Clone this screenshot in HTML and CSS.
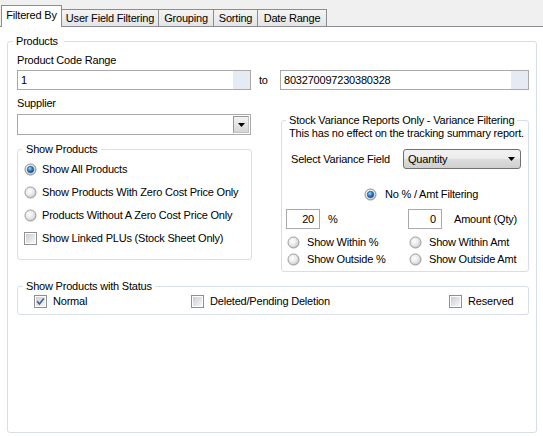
FILE: index.html
```html
<!DOCTYPE html>
<html>
<head>
<meta charset="utf-8">
<link rel="stylesheet" href="styles.css">
</head>
<body>
<svg class="defs" width="0" height="0">
  <defs>
    <radialGradient id="rg" cx="40%" cy="38%" r="65%">
      <stop offset="0" stop-color="#ffffff"/>
      <stop offset="0.55" stop-color="#e9e9e9"/>
      <stop offset="1" stop-color="#c4c4c4"/>
    </radialGradient>
    <radialGradient id="rd" cx="38%" cy="32%" r="70%">
      <stop offset="0" stop-color="#a8dcff"/>
      <stop offset="0.45" stop-color="#3c8fd6"/>
      <stop offset="1" stop-color="#0d4a88"/>
    </radialGradient>
    <linearGradient id="cg" x1="0" y1="0" x2="1" y2="1">
      <stop offset="0" stop-color="#c9cdd3"/>
      <stop offset="1" stop-color="#f7f7f7"/>
    </linearGradient>
  </defs>
</svg>
<div class="tabstrip">
  <div class="tab active t-fb">Filtered By</div>
  <div class="tab t-uff">User Field Filtering</div>
  <div class="tab t-grp">Grouping</div>
  <div class="tab t-srt">Sorting</div>
  <div class="tab t-dr">Date Range</div>
</div>
<div class="page">
  <fieldset class="gb products">
    <legend>Products</legend>
    <div class="lbl">Product Code Range</div>
    <div class="range">
      <div class="tb w-left"><span class="val">1</span><span class="side"></span></div>
      <span class="to">to</span>
      <div class="tb w-right"><span class="val">803270097230380328</span><span class="side"></span></div>
    </div>
    <div class="lower">
      <div class="col-left">
        <div class="lbl">Supplier</div>
        <div class="tb combo"><span class="val"></span><span class="ddbtn"><svg width="7" height="4" viewBox="0 0 7 4"><path d="M0 0H7L3.5 4Z" fill="#000"/></svg></span></div>
        <fieldset class="gb showprod">
          <legend>Show Products</legend>
          <div class="opt"><svg class="rb" viewBox="0 0 13 13"><circle cx="6.5" cy="6.5" r="5.5" fill="url(#rg)" stroke="#8c8c8c"/><circle cx="6.5" cy="6.5" r="3.2" fill="url(#rd)" stroke="#1e5284" stroke-width="0.7"/></svg>Show All Products</div>
          <div class="opt"><svg class="rb" viewBox="0 0 13 13"><circle cx="6.5" cy="6.5" r="5.5" fill="url(#rg)" stroke="#9a9a9a"/></svg>Show Products With Zero Cost Price Only</div>
          <div class="opt"><svg class="rb" viewBox="0 0 13 13"><circle cx="6.5" cy="6.5" r="5.5" fill="url(#rg)" stroke="#9a9a9a"/></svg>Products Without A Zero Cost Price Only</div>
          <div class="opt"><svg class="cb" viewBox="0 0 13 13"><rect x="0.5" y="0.5" width="12" height="12" fill="#fff" stroke="#8e8f8f"/><rect x="2" y="2" width="9" height="9" fill="url(#cg)"/></svg>Show Linked PLUs (Stock Sheet Only)</div>
        </fieldset>
      </div>
      <fieldset class="gb variance">
        <legend>Stock Variance Reports Only - Variance Filtering</legend>
        <div class="note">This has no effect on the tracking summary report.</div>
        <div class="selrow">
          <span class="sl">Select Variance Field</span>
          <div class="btncombo"><span>Quantity</span><svg width="7" height="4" viewBox="0 0 7 4"><path d="M0 0H7L3.5 4Z" fill="#000"/></svg></div>
        </div>
        <div class="opt nofilt"><svg class="rb" viewBox="0 0 13 13"><circle cx="6.5" cy="6.5" r="5.5" fill="url(#rg)" stroke="#8c8c8c"/><circle cx="6.5" cy="6.5" r="3.2" fill="url(#rd)" stroke="#1e5284" stroke-width="0.7"/></svg>No % / Amt Filtering</div>
        <div class="amtrow">
          <div class="tb num">20</div>
          <span class="pct">%</span>
          <div class="tb num">0</div>
          <span class="amt">Amount (Qty)</span>
        </div>
        <div class="within">
          <div class="opt"><svg class="rb" viewBox="0 0 13 13"><circle cx="6.5" cy="6.5" r="5.5" fill="url(#rg)" stroke="#9a9a9a"/></svg>Show Within %</div>
          <div class="opt"><svg class="rb" viewBox="0 0 13 13"><circle cx="6.5" cy="6.5" r="5.5" fill="url(#rg)" stroke="#9a9a9a"/></svg>Show Within Amt</div>
          <div class="opt"><svg class="rb" viewBox="0 0 13 13"><circle cx="6.5" cy="6.5" r="5.5" fill="url(#rg)" stroke="#9a9a9a"/></svg>Show Outside %</div>
          <div class="opt"><svg class="rb" viewBox="0 0 13 13"><circle cx="6.5" cy="6.5" r="5.5" fill="url(#rg)" stroke="#9a9a9a"/></svg>Show Outside Amt</div>
        </div>
      </fieldset>
    </div>
    <fieldset class="gb status">
      <legend>Show Products with Status</legend>
      <div class="statusrow">
        <div class="opt st1"><svg class="cb" viewBox="0 0 13 13"><rect x="0.5" y="0.5" width="12" height="12" fill="#fff" stroke="#8e8f8f"/><rect x="2" y="2" width="9" height="9" fill="url(#cg)"/><path d="M3.2 6.3L5.4 8.9L9.8 3.4" fill="none" stroke="#4a5d8a" stroke-width="1.6"/></svg>Normal</div>
        <div class="opt st2"><svg class="cb" viewBox="0 0 13 13"><rect x="0.5" y="0.5" width="12" height="12" fill="#fff" stroke="#8e8f8f"/><rect x="2" y="2" width="9" height="9" fill="url(#cg)"/></svg>Deleted/Pending Deletion</div>
        <div class="opt"><svg class="cb" viewBox="0 0 13 13"><rect x="0.5" y="0.5" width="12" height="12" fill="#fff" stroke="#8e8f8f"/><rect x="2" y="2" width="9" height="9" fill="url(#cg)"/></svg>Reserved</div>
      </div>
    </fieldset>
  </fieldset>
</div>
</body>
</html>
```
FILE: styles.css
```css
* { box-sizing: border-box; }
body {
  margin: 0;
  width: 543px;
  height: 436px;
  overflow: hidden;
  background: #fff;
  font-family: "Liberation Sans", Arial, sans-serif;
  font-size: 11px;
  line-height: 13px;
  letter-spacing: -0.2px;
  color: #000;
}
.defs { display: block; }

.tabstrip {
  height: 27px;
  background: #f0f0f0;
  border-bottom: 1px solid #898c95;
  display: flex;
  align-items: flex-end;
  padding-left: 1px;
}
.tab {
  height: 17px;
  border: 1px solid #898c95;
  border-bottom: 0;
  margin-left: -1px;
  background: linear-gradient(#f4f4f4, #e4e4e4);
  text-align: center;
  line-height: 16px;
  white-space: nowrap;
}
.tab.active {
  margin-left: 0;
  height: 22px;
  margin-bottom: -1px;
  background: #fff;
  position: relative;
  z-index: 1;
  line-height: 13px;
  padding-top: 3px;
}
.t-fb { width: 61px; }
.t-uff { width: 98px; }
.t-grp { width: 56px; }
.t-srt { width: 45px; }
.t-dr { width: 70px; }

.page { padding: 8px 6px 0 7px; }

.gb {
  margin: 0;
  border: 1px solid #d5dfe5;
  border-radius: 3px;
  min-width: 0;
}
.gb > legend {
  line-height: 13px;
  height: 13px;
  white-space: nowrap;
}
.products {
  height: 398px;
  padding: 6px 7px 0 9px;
}
.products > legend { margin-left: -4px; padding: 0 6px 0 3px; }

.lbl { height: 13px; }
.range {
  display: flex;
  margin-top: 3px;
  height: 20px;
}
.tb {
  height: 20px;
  border: 1px solid #a9a9a9;
  background: #fff;
  display: flex;
  align-items: center;
}
.tb .val {
  flex: 1;
  padding-left: 3px;
  white-space: nowrap;
  overflow: hidden;
}
.w-left { width: 234px; }
.w-right { width: 249px; }
.to { width: 29px; padding-left: 8px; line-height: 20px; }
.side {
  align-self: stretch;
  width: 17px;
  background: #e6ebf3;
}

.lower {
  display: flex;
  align-items: flex-start;
  margin-top: 7px;
}
.col-left { width: 235px; }
.combo { width: 234px; height: 21px; margin-top: 4px; }
.ddbtn {
  width: 16px;
  height: 17px;
  margin-right: 1px;
  border: 1px solid #989898;
  border-right-color: #c2c2c2;
  border-bottom-color: #c2c2c2;
  background: linear-gradient(#f3f3f3, #d6d6d6);
  display: flex;
  align-items: center;
  justify-content: center;
}
.ddbtn svg { display: block; }

.showprod {
  width: 235px;
  height: 117px;
  margin-top: 8px;
  padding: 2px 6px 0 6px;
}
.showprod > legend { margin-left: -2px; padding: 0 4px; }

.opt {
  display: flex;
  align-items: center;
  height: 23px;
  white-space: nowrap;
}
.rb, .cb {
  display: block;
  width: 13px;
  height: 13px;
  flex: none;
  margin-right: 5px;
}

.variance {
  width: 248px;
  height: 158px;
  margin: 17px 0 0 29px;
  padding: 0 4px 0 7px;
}
.variance > legend { margin-left: -3px; padding: 0 3px; }
.note { white-space: nowrap; }
.selrow {
  display: flex;
  align-items: center;
  margin-top: 9px;
  height: 20px;
}
.sl { width: 114px; padding-left: 2px; white-space: nowrap; }
.btncombo {
  width: 118px;
  height: 20px;
  border: 1px solid #707070;
  border-radius: 3px;
  background: linear-gradient(#f2f2f2 0%, #ebebeb 50%, #dddddd 50%, #cfcfcf 100%);
  display: flex;
  align-items: center;
  justify-content: space-between;
  padding: 0 5px 0 4px;
}
.btncombo svg { display: block; }

.nofilt { height: 17px; margin: 17px 0 0 75px; }
.nofilt .rb { margin-right: 8px; }

.amtrow {
  display: flex;
  align-items: center;
  margin: 6px 0 0 -3px;
  height: 20px;
}
.num { width: 34px; justify-content: flex-end; padding-right: 5px; }
.pct { width: 88px; padding-left: 8px; }
.amt { margin-left: 12px; white-space: nowrap; }

.within {
  display: grid;
  grid-template-columns: 122px 1fr;
  grid-auto-rows: 17px;
  margin: 5px 0 0 -2px;
}
.within .opt { height: 17px; }
.within .rb { margin-right: 7px; }

.status {
  height: 35px;
  margin-top: 8px;
  padding: 0 6px 0 16px;
}
.status > legend { margin-left: -11px; padding: 0 3px; }
.statusrow { display: flex; height: 17px; align-items: center; }
.statusrow .opt { height: 17px; }
.statusrow .cb { margin-right: 6px; }
.st1 { width: 157px; }
.st2 { width: 258px; }
```
